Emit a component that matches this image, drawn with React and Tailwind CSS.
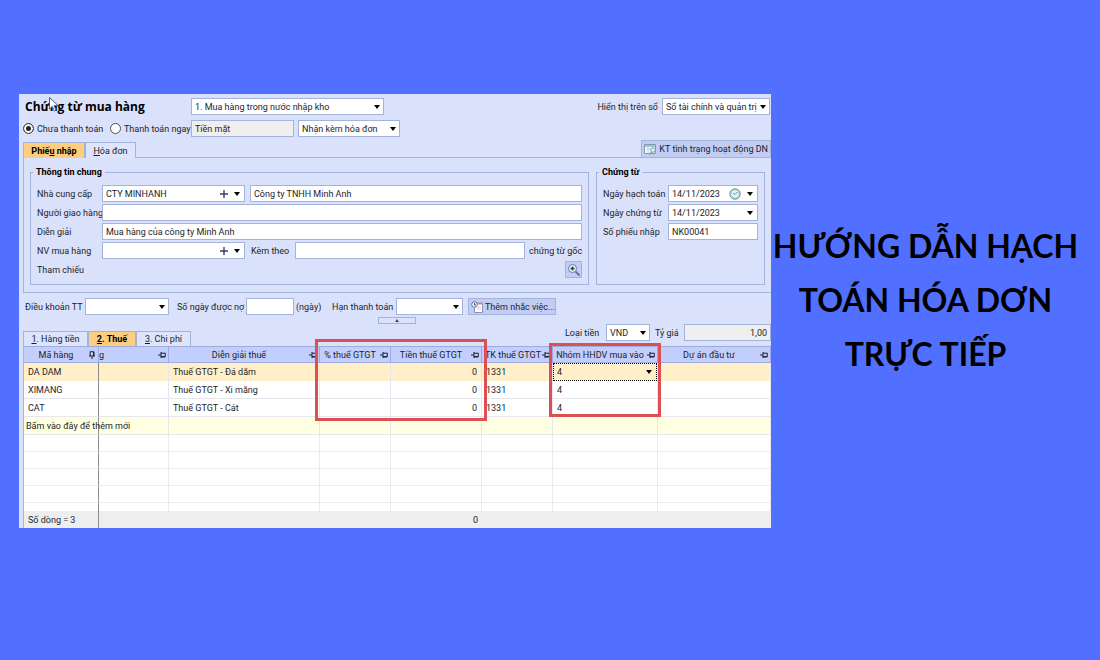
import React from 'react';
import clsx from 'clsx';

const columns = [
  { key: 'code', title: 'Mã hàng', width: 'w-[75px]' },
  { key: 'name', title: '', width: 'w-[70px]' },
  { key: 'note', title: 'Diễn giải thuế', width: 'w-[151px]' },
  { key: 'rate', title: '% thuế GTGT', width: 'w-[71px]' },
  { key: 'amount', title: 'Tiền thuế GTGT', width: 'w-[91px]' },
  { key: 'account', title: 'TK thuế GTGT', width: 'w-[71px]' },
  { key: 'group', title: 'Nhóm HHDV mua vào', width: 'w-[105px]' },
  { key: 'project', title: 'Dự án đầu tư', width: 'w-[113px]' },
];

const items = [
  { code: 'DA DAM', note: 'Thuế GTGT - Đá dăm', amount: '0', account: '1331', group: '4' },
  { code: 'XIMANG', note: 'Thuế GTGT - Xi măng', amount: '0', account: '1331', group: '4' },
  { code: 'CAT', note: 'Thuế GTGT - Cát', amount: '0', account: '1331', group: '4' },
];

const Caret = ({ className }) => (
  <svg viewBox="0 0 6 4" className={clsx('h-[4px] w-[6px] fill-black', className)} aria-hidden="true">
    <path d="M0 0h6L3 4z" />
  </svg>
);

const Plus = () => (
  <svg viewBox="0 0 8 8" className="h-2 w-2 stroke-[#33406e]" aria-hidden="true">
    <path d="M4 0v8M0 4h8" strokeWidth="1.4" />
  </svg>
);

const Pin = ({ vertical }) => (
  <svg viewBox="0 0 8 8" className={clsx('h-2 w-2', vertical && '-rotate-90')} fill="none" stroke="#1c2238" aria-hidden="true">
    <path d="M0 4h3M3 1v6M3 2.2h4.3v3.3H3M3 6h4.3" />
  </svg>
);

const Select = ({ id, value, label, className }) => (
  <div className={clsx('relative h-[17px] shrink-0', className)}>
    <select
      id={id}
      aria-label={label}
      defaultValue={value}
      className="block h-full w-full appearance-none border border-[#a3b3dc] bg-white pl-[3px] pr-3 outline-none"
    >
      <option>{value}</option>
    </select>
    <Caret className="pointer-events-none absolute right-1 top-[7px]" />
  </div>
);

const TextBox = ({ id, value = '', label, className }) => (
  <input
    id={id}
    aria-label={label}
    type="text"
    defaultValue={value}
    className={clsx('h-[17px] min-w-0 border border-[#a3b3dc] px-[3px] outline-none', className)}
  />
);

// Text box with its own buttons at the right end
const ComboBox = ({ id, value = '', icon, action, className }) => (
  <div className={clsx('flex h-[17px] min-w-0 items-center border border-[#a3b3dc] bg-white', className)}>
    <input id={id} type="text" defaultValue={value} className="h-full w-0 min-w-0 flex-1 px-[3px] outline-none" />
    {icon && <button aria-label={action} className="shrink-0 pr-[6px]">{icon}</button>}
    <button aria-label="Mở danh sách" className="flex w-[10px] shrink-0">
      <Caret />
    </button>
  </div>
);

const Row = ({ id, label, children }) => (
  <div className="flex h-[17px] items-center">
    <label htmlFor={id} className="w-[65px] shrink-0 whitespace-nowrap">{label}</label>
    {children}
  </div>
);

const Group = ({ title, children }) => (
  <fieldset className="min-w-0 border border-[#a3b3dc] px-[6px] pb-[6px]">
    <legend className="-ml-1 px-[3px] font-bold leading-[10px] text-black">{title}</legend>
    <div className="flex flex-col gap-[2px] pt-2">{children}</div>
  </fieldset>
);

const Radio = ({ id, label, checked, className }) => (
  <div className={clsx('flex items-center gap-[3px]', className)}>
    <input
      id={id}
      type="radio"
      name="payment"
      defaultChecked={checked}
      className="h-[11px] w-[11px] shrink-0 appearance-none rounded-full border border-[#4a4f60] bg-white checked:bg-[#222222] checked:shadow-[inset_0_0_0_2px_white]"
    />
    <label htmlFor={id} className="whitespace-nowrap">{label}</label>
  </div>
);

const Tab = ({ hotkey, before, after, active, className }) => (
  <button
    role="tab"
    aria-selected={!!active}
    className={clsx(
      'border border-b-0 border-[#a3b3dc] text-center whitespace-nowrap',
      active ? 'bg-[#fdce80] font-bold text-black' : 'bg-[#dde4fc]',
      className
    )}
  >
    {before}<u>{hotkey}</u>{after}
  </button>
);

const Toolbar = () => (
  <>
    <div className="flex h-[17px] items-center pl-[2px] pr-px">
      <h1 className="w-[166px] shrink-0 whitespace-nowrap font-['Open_Sans',sans-serif] text-[12px] font-bold text-black">
        Chứng từ mua hàng
      </h1>
      <Select value="1. Mua hàng trong nước nhập kho" label="Loại chứng từ" className="w-[193px]" />
      <label htmlFor="book" className="ml-auto pr-1">Hiển thị trên sổ</label>
      <Select id="book" value="Sổ tài chính và quản trị" className="w-[108px]" />
    </div>
    <div className="mt-[5px] flex h-[17px] items-center">
      <Radio id="unpaid" label="Chưa thanh toán" checked className="w-[87px]" />
      <Radio id="paid" label="Thanh toán ngay" className="w-[81px]" />
      <TextBox value="Tiền mặt" label="Hình thức" className="w-[103px] bg-[#efefef]" />
      <Select value="Nhận kèm hóa đơn" label="Hóa đơn" className="ml-1 w-[102px]" />
    </div>
  </>
);

const Receipt = () => (
  <>
    <div className="mt-[3px] flex h-[18px] items-end" role="tablist">
      <Tab before="Phiế" hotkey="u" after=" nhập" active className="h-4 w-[62px]" />
      <Tab hotkey="H" after="óa đơn" className="h-4 w-[51px]" />
      <button className="ml-auto flex h-[18px] items-center gap-[2px] whitespace-nowrap border border-[#a3b3dc] bg-[#c1cdf5] px-[2px]">
        <svg viewBox="0 0 13 12" className="h-3 w-[13px] shrink-0" aria-hidden="true">
          <path d="M.5 1.5h11v9H.5z" fill="#f6fbff" stroke="#7f9cae" />
          <path d="M1 2h10v2H1z" fill="#9fc7d6" />
          <path d="M4 4v6M2 6h5" stroke="#c5d4df" />
          <circle cx="9" cy="7" r="2.3" fill="#e4f3f8" stroke="#7f9cae" />
          <path d="M7.500 9l-2 2.500" stroke="#7f9cae" strokeWidth="1.300" />
        </svg>
        KT tình trạng hoạt động DN
      </button>
    </div>
    <div className="-mt-px grid grid-cols-[1fr_169px] gap-[7px] border-y border-l border-[#a3b3dc] px-[6px] pb-[7px] pt-[9px]">
      <Group title="Thông tin chung">
        <Row id="supplier" label="Nhà cung cấp">
          <ComboBox id="supplier" value="CTY MINHANH" icon={<Plus />} action="Thêm nhà cung cấp" className="w-[143px] shrink-0" />
          <TextBox value="Công ty TNHH Minh Anh" label="Tên nhà cung cấp" className="ml-[5px] flex-1 bg-white" />
        </Row>
        <Row id="deliverer" label="Người giao hàng">
          <TextBox id="deliverer" className="flex-1 bg-white" />
        </Row>
        <Row id="memo" label="Diễn giải">
          <TextBox id="memo" value="Mua hàng của công ty Minh Anh" className="flex-1 bg-white" />
        </Row>
        <Row id="buyer" label="NV mua hàng">
          <ComboBox id="buyer" icon={<Plus />} action="Thêm nhân viên" className="w-[143px] shrink-0" />
          <label htmlFor="attached" className="ml-[6px] w-[44px] shrink-0">Kèm theo</label>
          <TextBox id="attached" className="flex-1 bg-white" />
          <span className="w-[57px] shrink-0 whitespace-nowrap pl-1">chứng từ gốc</span>
        </Row>
        <Row id="reference" label="Tham chiếu">
          <button
            id="reference"
            aria-label="Tìm chứng từ"
            className="ml-auto flex h-[17px] w-[17px] items-center justify-center border border-[#a3b3dc] bg-[#c1cdf5]"
          >
            <svg viewBox="0 0 14 14" className="h-[14px] w-[14px]" fill="none" aria-hidden="true">
              <circle cx="5.500" cy="5.500" r="4" fill="#e8f6fb" stroke="#5b7fa8" />
              <path d="M5.500 3.500v4M3.500 5.500h4" stroke="#1f3d3a" strokeWidth="1.400" />
              <path d="M8.500 8.500l4 4" stroke="#5b6fa0" strokeWidth="1.800" />
            </svg>
          </button>
        </Row>
      </Group>
      <Group title="Chứng từ">
        <Row id="posted" label="Ngày hạch toán">
          <ComboBox
            id="posted"
            value="14/11/2023"
            action="Chọn giờ"
            icon={
              <svg viewBox="0 0 12 12" className="h-3 w-3" fill="none" aria-hidden="true">
                <circle cx="6" cy="6" r="5.200" fill="#b9dced" stroke="#71899c" />
                <circle cx="6" cy="6" r="3.200" fill="#e3f4fa" />
                <path d="M4 5l2 1.500L8.500 4" stroke="#4f9a86" />
              </svg>
            }
            className="flex-1"
          />
        </Row>
        <Row id="issued" label="Ngày chứng từ">
          <ComboBox id="issued" value="14/11/2023" className="flex-1" />
        </Row>
        <Row id="number" label="Số phiếu nhập">
          <TextBox id="number" value="NK00041" className="flex-1 bg-white" />
        </Row>
      </Group>
    </div>
    <div className="mt-[5px] flex h-[17px] items-center whitespace-nowrap pl-[2px]">
      <label htmlFor="terms" className="w-[60px]">Điều khoản TT</label>
      <Select id="terms" value="" className="w-[84px]" />
      <label htmlFor="days" className="w-[77px] pl-2">Số ngày được nợ</label>
      <TextBox id="days" className="w-[48px] bg-white" />
      <span className="w-[38px] pl-[2px]">(ngày)</span>
      <label htmlFor="due" className="w-[64px]">Hạn thanh toán</label>
      <Select id="due" value="" className="w-[67px]" />
      <button className="ml-[5px] flex h-[17px] w-[88px] items-center gap-[2px] border border-[#a3b3dc] bg-[#c1cdf5] pl-[2px]">
        <svg viewBox="0 0 12 12" className="h-3 w-3 shrink-0" fill="none" aria-hidden="true">
          <path d="M3.500 2.500h8v9h-8z" fill="#fff" stroke="#8c92bb" />
          <path d="M5 1.500h6.500v2H5z" fill="#e08086" />
          <path d="M6 6h4M6 8h4" stroke="#c9cde2" />
          <circle cx="3.500" cy="3.500" r="2.800" fill="#eef5ff" stroke="#5c73ad" />
          <path d="M3.500 2v2H5" stroke="#3f4f80" />
        </svg>
        Thêm nhắc việc...
      </button>
    </div>
    <button
      aria-label="Thu gọn"
      className="mx-auto mt-[2px] flex h-[7px] w-[38px] items-center justify-center border border-[#a3b3dc]"
    >
      <svg viewBox="0 0 4 3" className="h-[3px] w-[4px] fill-[#3c466b]" aria-hidden="true">
        <path d="M0 3h4L2 0z" />
      </svg>
    </button>
  </>
);

const headCell = 'relative h-[17px] border border-l-0 border-[#9fabdc] p-0 font-normal';

const Cell = ({ column, item, first }) => {
  if (column.key === 'group' && first) {
    return (
      <td className="border-r border-[#e6e6ee] p-0">
        <div className="relative border border-dotted border-black">
          <select
            aria-label="Nhóm HHDV mua vào"
            defaultValue={item.group}
            className="block h-4 w-full appearance-none bg-transparent pl-[3px] outline-none"
          >
            <option>{item.group}</option>
          </select>
          <Caret className="pointer-events-none absolute right-1 top-[6px]" />
        </div>
      </td>
    );
  }
  return (
    <td
      className={clsx(
        'whitespace-nowrap border-r border-[#e6e6ee] px-1 py-0',
        column.key === 'code' && 'border-r-[#8d8d8d]',
        column.key === 'amount' && 'text-right'
      )}
    >
      {item[column.key]}
    </td>
  );
};

const TaxGrid = () => (
  <>
    <div className="flex h-[22px] items-end">
      <div className="flex" role="tablist">
        <Tab hotkey="1" after=". Hàng tiền" className="h-[15px] w-[65px]" />
        <Tab hotkey="2" after=". Thuế" active className="h-[15px] w-[48px]" />
        <Tab hotkey="3" after=". Chi phí" className="h-[15px] w-[55px]" />
      </div>
      <div className="ml-auto flex items-center self-start">
        <label htmlFor="currency" className="w-[41px]">Loại tiền</label>
        <Select id="currency" value="VND" className="w-[44px]" />
        <label htmlFor="exchange" className="w-[34px] pl-[5px]">Tỷ giá</label>
        <TextBox id="exchange" value="1,00" className="w-[87px] bg-[#efefef] text-right" />
      </div>
    </div>
    <div className="relative">
      <table className="w-full table-fixed border-separate border-spacing-0 border-l border-[#a3b3dc] bg-white text-left">
        <thead className="bg-[#c2cefb]">
          <tr>
            {columns.map(({ key, title, width }) => (
              <th key={key} className={clsx(headCell, width)}>
                <div className="flex items-center whitespace-nowrap">
                  {key === 'name' && <span>g</span>}
                  <span className={clsx('min-w-0 flex-1', key === 'account' ? 'pl-[3px]' : 'text-center')}>{title}</span>
                  <span className="shrink-0 pr-[2px]"><Pin vertical={key === 'code'} /></span>
                </div>
              </th>
            ))}
          </tr>
        </thead>
        <tbody>
          {items.map((item, index) => (
            <tr key={item.code} className={clsx('h-[18px]', index === 0 ? 'bg-[#fff0c9]' : '[&>td]:border-b')}>
              {columns.map(column => (
                <Cell key={column.key} column={column} item={item} first={index === 0} />
              ))}
            </tr>
          ))}
          <tr className="h-[18px] bg-[#ffffe1]">
            {columns.map(({ key }) => (
              <td key={key} className={clsx('border-b border-r border-[#e6e6ee] py-0 pl-[2px] pr-0', key === 'code' && 'border-r-[#8d8d8d]')}>
                {key === 'code' && <div className="relative z-10 whitespace-nowrap">Bấm vào đây để thêm mới</div>}
              </td>
            ))}
          </tr>
          {[1, 2, 3, 4, 5].map(row => (
            <tr key={row} className={row === 5 ? 'h-2' : 'h-[17px]'}>
              {columns.map(({ key }) => (
                <td key={key} className={clsx('border-r border-[#ececec] p-0', key === 'code' && 'border-r-[#8d8d8d]', row < 5 && 'border-b')} />
              ))}
            </tr>
          ))}
        </tbody>
        <tfoot className="bg-[#eeeeee]">
          <tr className="h-[17px]">
            {columns.map(({ key }) => (
              <td key={key} className={clsx('whitespace-nowrap px-1 py-0', key === 'code' && 'border-r border-[#8d8d8d]', key === 'amount' && 'text-right')}>
                {key === 'code' && 'Số dòng = 3'}
                {key === 'amount' && '0'}
              </td>
            ))}
          </tr>
        </tfoot>
      </table>
      {/* Highlights over the tax and goods group columns */}
      <div className="pointer-events-none absolute -top-[7px] left-[39%] h-[82px] w-[23%] border-3 border-[#dc4f55]" />
      <div className="pointer-events-none absolute -top-[3px] left-[70.3%] h-[74px] w-[15%] border-3 border-[#dc4f55]" />
    </div>
  </>
);

const App = () => {
  return (
    <main className="grid min-h-screen grid-cols-[752fr_309fr] items-start bg-[#5170ff] pl-[19px] pr-5 pt-[94px]">
      <section className="relative bg-[#dae1fb] pl-1 pt-1 font-['Roboto',sans-serif] text-[9px] leading-[12px] text-[#1c1e2a]">
        <Toolbar />
        <Receipt />
        <TaxGrid />
        <svg viewBox="0 0 10 15" className="absolute left-[30px] top-[3px] h-[15px] w-[10px]" aria-hidden="true">
          <path d="M.5.500v11.500l2.800-2.600 2 4.600 1.800-.8-2-4.500h4z" fill="#fff" stroke="#555b70" />
        </svg>
      </section>
      <h2 className="whitespace-nowrap pt-[125px] text-center font-['Lato',sans-serif] text-[32px] font-bold leading-[54px] text-black">
        HƯỚNG DẪN HẠCH<br />TOÁN HÓA DƠN<br />TRỰC TIẾP
      </h2>
    </main>
  );
};

export default App;
